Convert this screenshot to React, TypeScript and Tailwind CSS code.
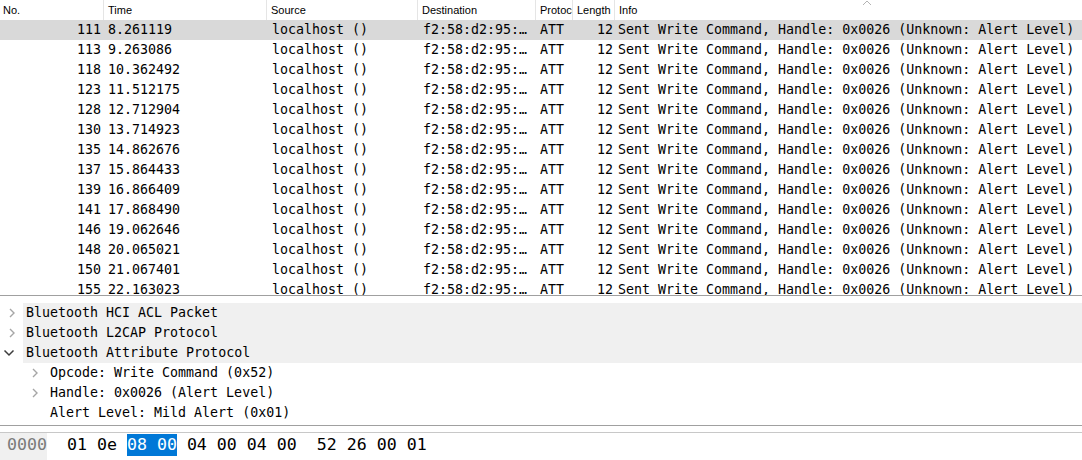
import React from "react";

const rows: [string, string][] = [
  ["111", "8.261119"],
  ["113", "9.263086"],
  ["118", "10.362492"],
  ["123", "11.512175"],
  ["128", "12.712904"],
  ["130", "13.714923"],
  ["135", "14.862676"],
  ["137", "15.864433"],
  ["139", "16.866409"],
  ["141", "17.868490"],
  ["146", "19.062646"],
  ["148", "20.065021"],
  ["150", "21.067401"],
  ["155", "22.163023"],
];

const mono = "font-['DejaVu_Sans_Mono',monospace]";

function ChevronRight({ color = "#a6a6a6" }: { color?: string }) {
  return (
    <svg width="8" height="10" viewBox="0 0 8 10" className="shrink-0">
      <path d="M2 1 L6 5 L2 9" fill="none" stroke={color} strokeWidth="1.4" />
    </svg>
  );
}

function ChevronDown() {
  return (
    <svg width="12" height="8" viewBox="0 0 12 8" className="shrink-0">
      <path d="M1.5 1.5 L6 6 L10.5 1.5" fill="none" stroke="#3c3c3c" strokeWidth="1.5" />
    </svg>
  );
}

function HeaderCell({ w, label, last }: { w: string; label: string; last?: boolean }) {
  return (
    <div className={`${w} h-full shrink-0 overflow-hidden whitespace-nowrap pl-[4px] ${last ? "" : "border-r border-[#e5e5e5]"}`}>
      {label}
    </div>
  );
}

export default function App() {
  return (
    <div className="flex h-[460px] w-full flex-col overflow-hidden bg-white text-black">
      {/* packet list */}
      <div className="h-[296px] shrink-0 overflow-hidden border-b border-[#a0a0a0]">
        <div className="relative flex h-[20px] items-center font-['Liberation_Sans',sans-serif] text-[11px] leading-[20px]">
          <div className="h-full w-[104px] shrink-0 border-r border-[#e5e5e5] pl-[3px]">No.</div>
          <HeaderCell w="w-[163px]" label="Time" />
          <HeaderCell w="w-[151px]" label="Source" />
          <HeaderCell w="w-[118px]" label="Destination" />
          <HeaderCell w="w-[37px]" label="Protocol" />
          <HeaderCell w="w-[42px]" label="Length" />
          <HeaderCell w="flex-1" label="Info" last />
          <svg width="10" height="6" viewBox="0 0 10 6" className="absolute left-[862px] top-0">
            <path d="M1 5 L5 1 L9 5" fill="none" stroke="#b4b4b4" strokeWidth="1" />
          </svg>
        </div>
        {rows.map(([no, time], i) => (
          <div
            key={no}
            className={`flex h-[20px] whitespace-nowrap ${mono} text-[13.3px] leading-[20px] ${i === 0 ? "bg-[#d9d9d9]" : ""}`}
          >
            <div className="w-[104px] shrink-0 pr-[3px] text-right">{no}</div>
            <div className="w-[163px] shrink-0 pl-[4px]">{time}</div>
            <div className="w-[151px] shrink-0 pl-[5px]">localhost ()</div>
            <div className="w-[118px] shrink-0 overflow-hidden pl-[5px]">f2:58:d2:95:…</div>
            <div className="w-[37px] shrink-0 overflow-hidden pl-[4px]">ATT</div>
            <div className="w-[42px] shrink-0 pr-[2px] text-right">12</div>
            <div className="flex-1 overflow-hidden pl-[3px]">Sent Write Command, Handle: 0x0026 (Unknown: Alert Level)</div>
          </div>
        ))}
      </div>

      {/* packet details */}
      <div className={`h-[130px] shrink-0 border-b border-[#a0a0a0] pt-[7px] ${mono} text-[13.3px] leading-[20px]`}>
        <div className="flex h-[20px] items-center">
          <div className="flex w-[23px] shrink-0 justify-center pl-[1px]"><ChevronRight /></div>
          <div className="flex-1 bg-[#f0f0f0] pl-[3px]">Bluetooth HCI ACL Packet</div>
        </div>
        <div className="flex h-[20px] items-center">
          <div className="flex w-[23px] shrink-0 justify-center pl-[1px]"><ChevronRight /></div>
          <div className="flex-1 bg-[#f0f0f0] pl-[3px]">Bluetooth L2CAP Protocol</div>
        </div>
        <div className="flex h-[20px] items-center">
          <div className="flex w-[23px] shrink-0 justify-center pr-[5px]"><ChevronDown /></div>
          <div className="flex-1 bg-[#f0f0f0] pl-[3px]">Bluetooth Attribute Protocol</div>
        </div>
        <div className="flex h-[20px] items-center pl-[31px]">
          <ChevronRight />
          <span className="pl-[11px]">Opcode: Write Command (0x52)</span>
        </div>
        <div className="flex h-[20px] items-center pl-[31px]">
          <ChevronRight />
          <span className="pl-[11px]">Handle: 0x0026 (Alert Level)</span>
        </div>
        <div className="flex h-[20px] items-center pl-[50px]">Alert Level: Mild Alert (0x01)</div>
      </div>

      {/* bytes */}
      <div className="mt-[6px] flex-1 border-t border-[#c8c8c8]">
        <div className={`flex h-full whitespace-pre ${mono} text-[16.6px] leading-[22px]`}>
          <div className="h-full w-[47px] shrink-0 bg-[#f0f0f0] pl-[7px] pt-[1px] text-[#7a7a7a]">0000</div>
          <div className="flex h-[23px] pt-[1px]">
            <span>{"  01 0e "}</span>
            <span className="bg-[#0078d7] text-white">08 00</span>
            <span>{" 04 00 04 00  52 26 00 01"}</span>
          </div>
        </div>
      </div>
    </div>
  );
}
